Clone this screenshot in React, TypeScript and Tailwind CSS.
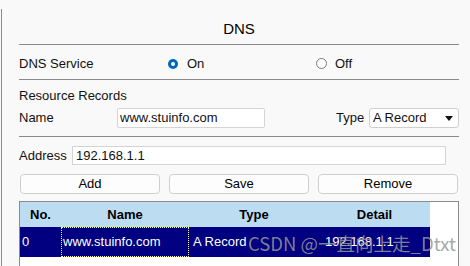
import React from "react"

const font = { fontFamily: '"Liberation Sans", Arial, sans-serif' }

function Radio({ on, label }: { on?: boolean; label: string }) {
  return (
    <div className="flex items-center">
      {on ? (
        <span className="flex h-[10px] w-[10px] items-center justify-center rounded-full bg-[#0067c0]">
          <span className="h-[4px] w-[4px] rounded-full bg-white" />
        </span>
      ) : (
        <span className="h-[11px] w-[11px] rounded-full border border-[#7a7a7a] bg-[#fdfdfd]" />
      )}
      <span className={on ? "ml-[9px]" : "ml-[8px]"}>{label}</span>
    </div>
  )
}

function Button({ children }: { children: React.ReactNode }) {
  return (
    <div className="flex h-[20px] flex-1 items-center justify-center rounded-[4px] border border-[#cfcfcf] bg-[#fdfdfd] text-[13px] text-black">
      {children}
    </div>
  )
}

export default function App() {
  return (
    <div className="relative h-[266px] w-[470px] overflow-hidden bg-[#f9f9f9] pl-[1px] pt-[9px] text-[13px] text-[#111]" style={font}>
      <div className="h-full border-l border-[#8b8b8b] pl-[17px]">
        <div className="w-[440px]">
          {/* title */}
          <div className="flex h-[36px] items-start justify-center border-b border-[#8a8a8a] pt-[11px] text-[15px] leading-[18px] text-black">
            DNS
          </div>

          {/* service */}
          <div className="flex h-[35px] items-center border-b border-[#8a8a8a] pt-[3px]">
            <div className="w-[149px]">DNS Service</div>
            <div className="w-[148px]">
              <Radio on label="On" />
            </div>
            <Radio label="Off" />
          </div>

          {/* records */}
          <div className="pt-[8px] leading-[16px]">Resource Records</div>
          <div className="mt-[4px] flex h-[20px] items-center">
            <div className="w-[98px]">Name</div>
            <div className="flex h-[20px] w-[148px] items-center rounded-[2px] border border-[#d4d4d4] bg-white pl-[2px]">
              www.stuinfo.com
            </div>
            <div className="ml-[71px] w-[33px]">Type</div>
            <div className="flex h-[20px] w-[90px] items-center justify-between rounded-[3px] border border-[#cfcfcf] bg-white pl-[3px] pr-[5px]">
              <span>A Record</span>
              <svg width="8" height="5" viewBox="0 0 8 5">
                <path d="M0 0h8L4 5z" fill="#111" />
              </svg>
            </div>
          </div>
          <div className="mt-[8px] border-b border-[#8a8a8a]" />

          {/* address */}
          <div className="mt-[9px] flex h-[19px] items-center">
            <div className="w-[53px]">Address</div>
            <div className="flex h-[19px] w-[374px] items-center border border-[#d4d4d4] bg-white pl-[3px]">
              192.168.1.1
            </div>
          </div>

          {/* buttons */}
          <div className="ml-[1px] mt-[9px] flex w-[438px] gap-[9px]">
            <Button>Add</Button>
            <Button>Save</Button>
            <Button>Remove</Button>
          </div>

          {/* table */}
          <div className="mt-[7px] h-[80px] w-[440px] border border-[#8c8c8c] bg-white">
            <div className="flex h-[25px] w-[410px] items-center bg-[#bcdcf2] text-[13px] font-bold text-black">
              <div className="w-[41px] text-center">No.</div>
              <div className="w-[128px] text-center">Name</div>
              <div className="w-[130px] text-center">Type</div>
              <div className="flex-1 text-center">Detail</div>
            </div>
            <div className="flex h-[30px] w-[410px] bg-[#000080] text-white">
              <div className="flex w-[41px] items-center pl-[2px]">0</div>
              <div className="flex w-[128px] items-center border border-dotted border-[#ffff66] pl-[1px]">www.stuinfo.com</div>
              <div className="flex w-[130px] items-center pl-[4px]">A Record</div>
              <div className="flex flex-1 items-center pl-[6px]">192.168.1.1</div>
            </div>
          </div>
        </div>
      </div>

      {/* watermark */}
      <div
        className="absolute left-[248px] top-[231px] text-[18.5px] leading-[24px] text-[rgba(150,150,150,0.85)]"
        style={{ fontFamily: '"Noto Sans CJK SC", "Liberation Sans", sans-serif' }}
      >
        CSDN @一直向上走_Dtxt
      </div>
    </div>
  )
}
